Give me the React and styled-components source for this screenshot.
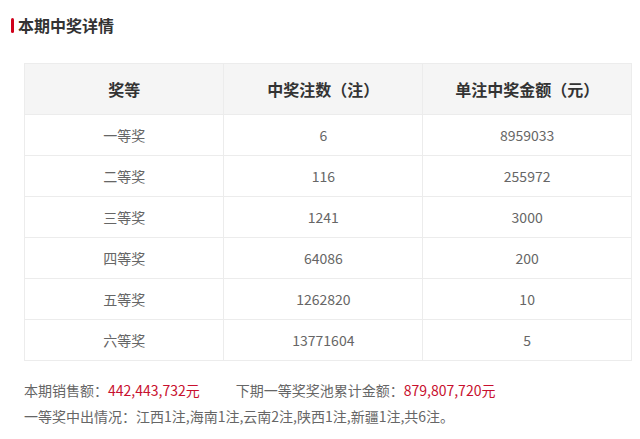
import React from 'react';
import styled, {createGlobalStyle} from 'styled-components';

const Global = createGlobalStyle`
  body {
    margin: 0;
    background: #fff;
    font-family: "Microsoft YaHei", "Noto Sans CJK SC", sans-serif;
  }
`;

const Page = styled.div`
  padding: 12px 8px 0 11px;
`;

const Title = styled.h2`
  margin: 0;
  display: flex;
  align-items: center;
  font-size: 16px;
  font-weight: bold;
  color: #333;
  height: 26px;
  &::before {
    content: '';
    width: 3px;
    height: 15px;
    border-radius: 2px;
    background: #d0021b;
    margin-right: 4px;
  }
`;

const Table = styled.table`
  margin: 25px 0 0 13px;
  width: 608px;
  border-collapse: collapse;
  text-align: center;
  font-size: 14px;
  color: #666;
`;

const Th = styled.th`
  background: #f5f5f5;
  height: 50px;
  padding: 0;
  font-size: 16px;
  color: #333;
  font-weight: bold;
  border: 1px solid #ececec;
`;

const Td = styled.td`
  height: 40px;
  padding: 0;
  border: 1px solid #ececec;
  width: ${p => p.w}px;
`;

const Info = styled.div`
  margin: 16px 0 0 13px;
  font-size: 14px;
  color: #666;
  line-height: 26px;
`;

const Red = styled.span`
  color: #c8102e;
  margin-right: ${p => p.gap || 0}px;
`;

const rows = [
  ['一等奖', '6', '8959033'],
  ['二等奖', '116', '255972'],
  ['三等奖', '1241', '3000'],
  ['四等奖', '64086', '200'],
  ['五等奖', '1262820', '10'],
  ['六等奖', '13771604', '5']
];

export default function App() {
  return (
    <Page>
      <Global />
      <Title>本期中奖详情</Title>
      <Table>
        <thead>
          <tr>
            <Th>奖等</Th>
            <Th>中奖注数（注）</Th>
            <Th>单注中奖金额（元）</Th>
          </tr>
        </thead>
        <tbody>
          {rows.map(r => (
            <tr key={r[0]}>
              <Td w={200}>{r[0]}</Td>
              <Td w={199}>{r[1]}</Td>
              <Td w={209}>{r[2]}</Td>
            </tr>
          ))}
        </tbody>
      </Table>
      <Info>
        <div>
          本期销售额：<Red gap={36}>442,443,732元</Red>下期一等奖奖池累计金额：<Red>879,807,720元</Red>
        </div>
        <div>一等奖中出情况：江西1注,海南1注,云南2注,陕西1注,新疆1注,共6注。</div>
      </Info>
    </Page>
  );
}
